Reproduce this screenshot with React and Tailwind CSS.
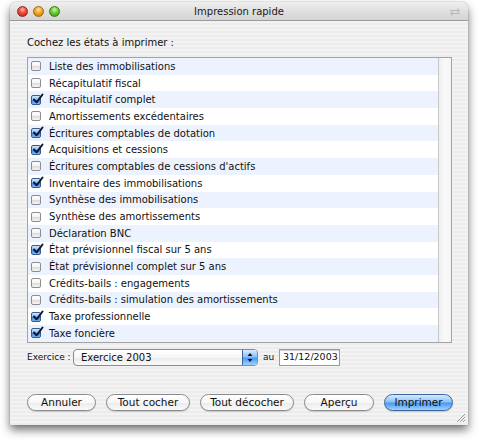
import React from "react";

const items = [
  ["Liste des immobilisations", false],
  ["Récapitulatif fiscal", false],
  ["Récapitulatif complet", true],
  ["Amortissements excédentaires", false],
  ["Écritures comptables de dotation", true],
  ["Acquisitions et cessions", true],
  ["Écritures comptables de cessions d'actifs", false],
  ["Inventaire des immobilisations", true],
  ["Synthèse des immobilisations", false],
  ["Synthèse des amortissements", false],
  ["Déclaration BNC", false],
  ["État prévisionnel fiscal sur 5 ans", true],
  ["État prévisionnel complet sur 5 ans", false],
  ["Crédits-bails : engagements", false],
  ["Crédits-bails : simulation des amortissements", false],
  ["Taxe professionnelle", true],
  ["Taxe foncière", true],
];

function Box({ checked }) {
  if (checked) {
    return (
      <div className="relative shrink-0 w-[10px] h-[10px] rounded-[2px] border border-[#355a94] bg-[linear-gradient(180deg,#d5e6fb_0%,#8fbaf0_45%,#3f86e0_55%,#7fb6f4_100%)]">
        <svg className="absolute left-[0px] top-[-3px]" width="12" height="12" viewBox="0 0 12 12">
          <path d="M2 6.5 L4.6 9.3 L10.5 1.5" fill="none" stroke="#0b1a33" strokeWidth="2" strokeLinecap="round" strokeLinejoin="round" />
        </svg>
      </div>
    );
  }
  return (
    <div className="shrink-0 w-[10px] h-[10px] rounded-[2px] border border-[#8d8d8d] bg-[linear-gradient(180deg,#ffffff_0%,#f2f2f2_50%,#dcdcdc_55%,#f6f6f6_100%)]" />
  );
}

function Btn({ children, w, primary }) {
  return (
    <div
      className={
        "shrink-0 h-[17px] rounded-full flex items-center justify-center text-[10.5px] text-[#111] shadow-[0_1px_1px_rgba(0,0,0,0.15)] " +
        (primary
          ? "border border-[#3b63a0] bg-[linear-gradient(180deg,#d9ebff_0%,#8cc2f8_45%,#4a9af0_55%,#9fd3ff_100%)]"
          : "border border-[#8a8a8a] bg-[linear-gradient(180deg,#ffffff_0%,#f7f7f7_50%,#ececec_55%,#fafafa_100%)]")
      }
      style={{ width: w }}
    >
      {children}
    </div>
  );
}

export default function App() {
  return (
    <div className="w-[479px] h-[446px] bg-white overflow-hidden font-['Lucida_Grande','DejaVu_Sans',sans-serif]">
      <div className="ml-[10px] mt-[2px] w-[458px] h-[423px] rounded-t-[6px] flex flex-col shadow-[0_5px_10px_rgba(0,0,0,0.55),0_0_1px_rgba(0,0,0,0.6)]">
        {/* title bar */}
        <div className="relative h-[19px] rounded-t-[6px] border-b border-[#9a9a9a] bg-[linear-gradient(180deg,#efefef_0%,#e0e0e0_50%,#d4d4d4_100%)] flex items-center justify-center">
          <div className="absolute left-[7px] top-[4px] flex gap-[5px]">
            <div className="w-[11px] h-[11px] rounded-full border border-[#8f2a22] bg-[radial-gradient(circle_at_50%_30%,#ffb3a8_0%,#f0483a_45%,#b01d12_100%)]" />
            <div className="w-[11px] h-[11px] rounded-full border border-[#9a6a10] bg-[radial-gradient(circle_at_50%_30%,#ffe2a0_0%,#f5a623_45%,#c06c05_100%)]" />
            <div className="w-[11px] h-[11px] rounded-full border border-[#3d7a1a] bg-[radial-gradient(circle_at_50%_30%,#c9f5a0_0%,#6ccc3a_45%,#2f8a10_100%)]" />
          </div>
          <span className="text-[10px] text-[#1a1a1a]">Impression rapide</span>
          <svg className="absolute right-[7px] top-[6px]" width="12" height="8" viewBox="0 0 12 8">
            <path d="M1 2.5 H10 M8 0.5 L10.5 2.5 L8 4.5 M11 5.5 H2 M4 3.5 L1.5 5.5 L4 7.5" fill="none" stroke="#b8b8b8" strokeWidth="1" />
          </svg>
        </div>
        {/* body */}
        <div className="relative flex-1 pl-[17px] pr-[16px] bg-[repeating-linear-gradient(0deg,#ececec_0px,#ececec_2px,#f3f3f3_2px,#f3f3f3_4px)]">
          <div className="mt-[15px] h-[14px] text-[10px] leading-[14px] text-[#111] whitespace-nowrap">Cochez les états à imprimer :</div>
          <div className="mt-[7px] h-[286px] border border-[#a3a3a3] flex bg-white">
            <div className="flex-1 flex flex-col">
              {items.map(([label, checked], i) => (
                <div
                  key={i}
                  className={
                    "h-[16.7px] flex items-center pl-[3px] gap-[8px] text-[10px] text-[#111] " +
                    (i % 2 === 0 ? "bg-[#edf3fe]" : "bg-white")
                  }
                >
                  <Box checked={checked} />
                  <span className="whitespace-nowrap">{label}</span>
                </div>
              ))}
            </div>
            <div className="w-[13px] border-l border-[#c9c9c9] bg-[linear-gradient(90deg,#eeeeee_0%,#fafafa_50%,#f4f4f4_100%)]" />
          </div>
          {/* exercice row */}
          <div className="mt-[6px] h-[17px] flex items-center text-[9px] text-[#111]">
            <span className="w-[46px] shrink-0 whitespace-nowrap">Exercice :</span>
            <div className="w-[185px] shrink-0 h-[17px] rounded-[4px] border border-[#8a8a8a] flex overflow-hidden bg-[linear-gradient(180deg,#ffffff_0%,#f6f6f6_50%,#ececec_55%,#fafafa_100%)]">
              <div className="flex-1 flex items-center pl-[7px] text-[10px]">Exercice 2003</div>
              <div className="w-[15px] border-l border-[#3b63a0] bg-[linear-gradient(180deg,#d9ebff_0%,#8cc2f8_45%,#4a9af0_55%,#9fd3ff_100%)] flex items-center justify-center">
                <svg width="6" height="11" viewBox="0 0 6 11">
                  <path d="M0.5 4 L3 1 L5.5 4 Z M0.5 7 L3 10 L5.5 7 Z" fill="#111" />
                </svg>
              </div>
            </div>
            <span className="ml-[5px] w-[16px] shrink-0">au</span>
            <div className="w-[61px] shrink-0 h-[17px] border border-[#9a9a9a] bg-white flex items-center pl-[3px] text-[9.5px] shadow-[inset_0_1px_1px_rgba(0,0,0,0.2)] whitespace-nowrap">31/12/2003</div>
          </div>
          {/* buttons */}
          <div className="mt-[28px] flex gap-[10px] items-center">
            <Btn w={69}>Annuler</Btn>
            <Btn w={84}>Tout cocher</Btn>
            <Btn w={94}>Tout décocher</Btn>
            <Btn w={70}>Aperçu</Btn>
            <Btn w={69} primary>Imprimer</Btn>
          </div>
          <svg className="absolute right-[2px] bottom-[2px]" width="11" height="11" viewBox="0 0 11 11">
            <path d="M10 2 L2 10 M10 5 L5 10 M10 8 L8 10" stroke="#9a9a9a" strokeWidth="1" />
          </svg>
        </div>
      </div>
    </div>
  );
}
